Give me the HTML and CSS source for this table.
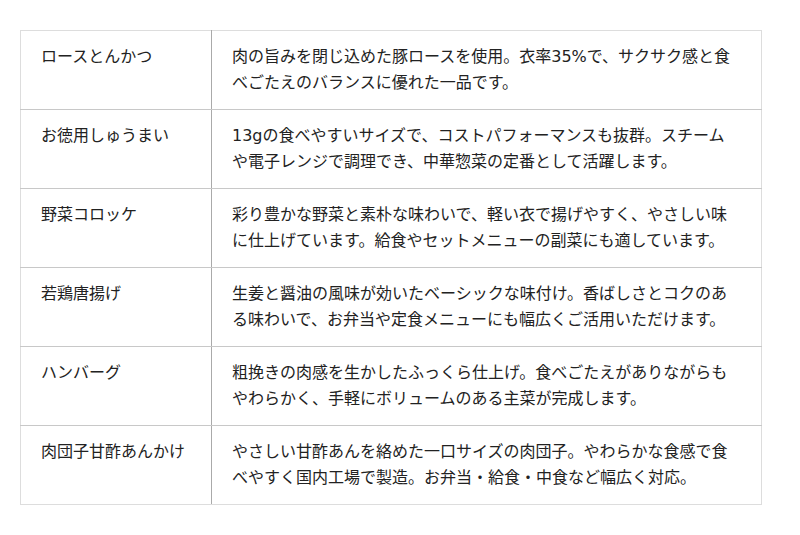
FILE: index.html
```html
<!DOCTYPE html>
<html lang="ja">
<head>
<meta charset="utf-8">
<link rel="stylesheet" href="styles.css">
</head>
<body>
<table class="menu">
  <tr><td class="name">ロースとんかつ</td><td class="desc">肉の旨みを閉じ込めた豚ロースを使用。衣率35%で、サクサク感と食べごたえのバランスに優れた一品です。</td></tr>
  <tr><td class="name">お徳用しゅうまい</td><td class="desc">13gの食べやすいサイズで、コストパフォーマンスも抜群。スチームや電子レンジで調理でき、中華惣菜の定番として活躍します。</td></tr>
  <tr><td class="name">野菜コロッケ</td><td class="desc">彩り豊かな野菜と素朴な味わいで、軽い衣で揚げやすく、やさしい味に仕上げています。給食やセットメニューの副菜にも適しています。</td></tr>
  <tr><td class="name">若鶏唐揚げ</td><td class="desc">生姜と醤油の風味が効いたベーシックな味付け。香ばしさとコクのある味わいで、お弁当や定食メニューにも幅広くご活用いただけます。</td></tr>
  <tr><td class="name">ハンバーグ</td><td class="desc">粗挽きの肉感を生かしたふっくら仕上げ。食べごたえがありながらもやわらかく、手軽にボリュームのある主菜が完成します。</td></tr>
  <tr><td class="name">肉団子甘酢あんかけ</td><td class="desc">やさしい甘酢あんを絡めた一口サイズの肉団子。やわらかな食感で食べやすく国内工場で製造。お弁当・給食・中食など幅広く対応。</td></tr>
</table>
</body>
</html>
```
FILE: styles.css
```css
html, body {
  margin: 0;
  padding: 0;
  background: #fff;
}
body {
  padding: 30px 38px 0 20px;
  font-family: "DejaVu Sans", "Noto Sans CJK JP", sans-serif;
  font-size: 16px;
  color: #222;
}
.menu {
  width: 742px;
  border-collapse: collapse;
  border: 1px solid #ddd;
}
.menu td {
  vertical-align: top;
  padding: 13px 20px;
  line-height: 26px;
  border-bottom: 1px solid #c8c8c8;
}
.menu tr:last-child td {
  border-bottom: 1px solid #ddd;
}
.menu .name {
  width: 150px;
  border-right: 1px solid #aaa;
}
.menu .desc {
  padding-right: 26px;
  border-right: 1px solid #ddd;
}
```
